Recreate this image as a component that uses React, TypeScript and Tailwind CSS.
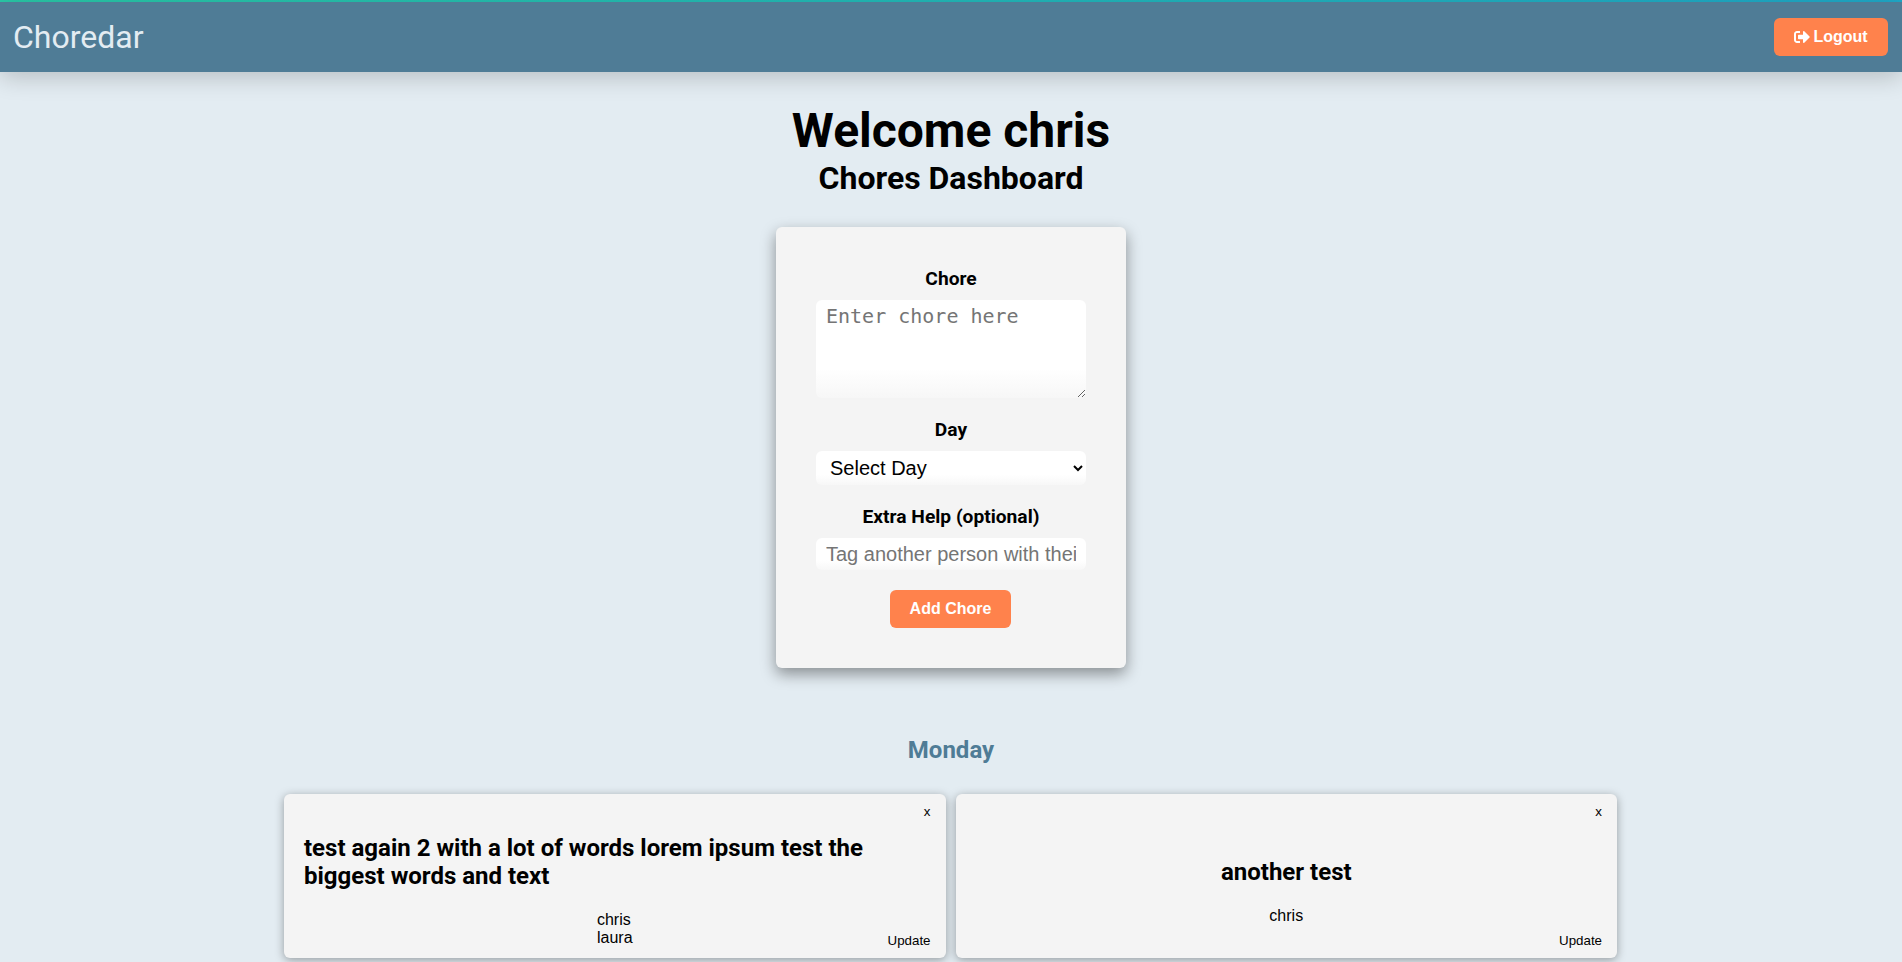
import { FaSignOutAlt } from 'react-icons/fa';

interface Chore {
  id: number;
  title: string;
  people: string[];
  centered: boolean;
}

const chores: Chore[] = [
  { id: 1, title: 'test again 2 with a lot of words lorem ipsum test the biggest words and text', people: ['chris', 'laura'], centered: false },
  { id: 2, title: 'another test', people: ['chris'], centered: true },
];

const fieldBg = 'bg-linear-to-b from-white from-70% to-[#f7f7f7]';

function ChoreCard({ chore }: { chore: Chore }) {
  return (
    <div className={`relative flex h-[164px] flex-col items-center justify-center gap-[21px] rounded-[6px] bg-[#f4f4f4] px-5 shadow-[0_2px_10px_rgba(0,0,0,0.35)] ${chore.centered ? 'pt-[31px]' : 'pt-[29px]'}`}>
      <button className="absolute right-[15px] top-[8px] font-['Liberation_Sans',sans-serif] text-[13.33px] text-black">x</button>
      <h3 className={`w-full font-['Roboto',sans-serif] text-[24px] font-bold leading-[28px] text-black ${chore.centered ? 'text-center' : 'text-left'}`}>
        {chore.title}
      </h3>
      <div className="font-['Liberation_Sans',sans-serif] text-[16px] leading-[18px] text-black">
        {chore.people.map((p) => (
          <p key={p}>{p}</p>
        ))}
      </div>
      <button className="absolute bottom-[7px] right-[15px] font-['Liberation_Sans',sans-serif] text-[13.33px] text-black">Update</button>
    </div>
  );
}

export default function App() {
  return (
    <div className="min-h-[962px] bg-[#e3ecf2] font-['Roboto',sans-serif]">
      <div className="h-[2px] bg-linear-to-r from-[#2ac9a8] to-[#1fa9c9]" />
      <nav className="flex h-[70px] items-center justify-between bg-[#4f7c96] pl-[13px] pr-[14px] shadow-[0_5px_25px_rgba(0,0,0,0.2)]">
        <span className="text-[32px] font-normal text-[#e3ecf2]">Choredar</span>
        <button className="flex h-[38px] w-[114px] items-center justify-center gap-[3px] rounded-[6px] bg-[#ff824c] font-['Liberation_Sans',sans-serif] text-[16px] font-bold text-white">
          <FaSignOutAlt className="text-[16px]" />
          Logout
        </button>
      </nav>

      <main className="flex flex-col items-center">
        <h1 className="mt-[31px] text-[48px] font-bold leading-[56px] text-black">Welcome chris</h1>
        <h2 className="text-[32px] font-bold leading-[38px] text-black">Chores Dashboard</h2>

        <form className="mt-[30px] flex h-[441px] w-[350px] flex-col items-center rounded-[6px] bg-[#f4f4f4] px-10 pt-[40px] shadow-[0_6px_15px_rgba(0,0,0,0.4)]">
          <label className="text-[19.2px] font-bold leading-[23px] text-black">Chore</label>
          <textarea
            placeholder="Enter chore here"
            className={`mt-[10px] h-[98px] w-[270px] rounded-[6px] px-[10px] py-[5px] font-['DejaVu_Sans_Mono',monospace] text-[20px] leading-[23px] outline-none placeholder:text-[#757575] ${fieldBg}`}
          />
          <label className="mt-[20px] text-[19.2px] font-bold leading-[23px] text-black">Day</label>
          <select className={`mt-[10px] h-[34px] w-[270px] rounded-[6px] px-[10px] font-['Liberation_Sans',sans-serif] text-[20px] text-black outline-none ${fieldBg}`}>
            <option>Select Day</option>
          </select>
          <label className="mt-[20px] text-[19.2px] font-bold leading-[23px] text-black">Extra Help (optional)</label>
          <input
            placeholder="Tag another person with their username"
            className={`mt-[10px] h-[32px] w-[270px] rounded-[6px] px-[10px] font-['Liberation_Sans',sans-serif] text-[20px] outline-none placeholder:text-[#757575] ${fieldBg}`}
          />
          <button type="button" className="mr-[1px] mt-[20px] h-[38px] w-[121px] rounded-[6px] bg-[#ff824c] font-['Liberation_Sans',sans-serif] text-[16px] font-bold text-white">
            Add Chore
          </button>
        </form>

        <h2 className="mt-[68px] text-[24px] font-bold leading-[28px] text-[#4f7c96]">Monday</h2>

        <div className="mr-[1px] mt-[30px] grid w-[1333px] grid-cols-2 gap-[10px]">
          {chores.map((c) => (
            <ChoreCard key={c.id} chore={c} />
          ))}
        </div>
      </main>
    </div>
  );
}
